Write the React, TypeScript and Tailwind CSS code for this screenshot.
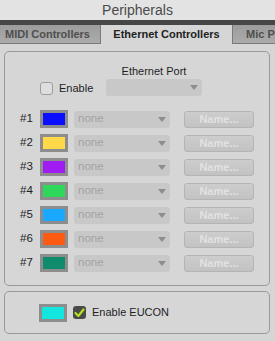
const ROWS = [
  { n: 1, color: "#0a10ff" },
  { n: 2, color: "#ffd94a" },
  { n: 3, color: "#a11cf2" },
  { n: 4, color: "#2fd85a" },
  { n: 5, color: "#1aa8ff" },
  { n: 6, color: "#ff5a12" },
  { n: 7, color: "#0e8c6c" },
];

function Swatch({ color }: { color: string }) {
  return (
    <div className="h-[18px] w-[28px] shrink-0 border-[3px] border-[#8d8d8d] bg-[#8d8d8d]">
      <div className="h-full w-full" style={{ background: color }} />
    </div>
  );
}

function Arrow() {
  return (
    <svg width="8" height="5" viewBox="0 0 8 5" className="shrink-0">
      <path d="M0 0 L8 0 L4 5 Z" fill="#8c8c8c" />
    </svg>
  );
}

function Select({ width, label }: { width: number; label?: string }) {
  return (
    <div
      className="flex h-[17px] shrink-0 items-center justify-between rounded-[3px] bg-[#c8c8c8] pl-[4px] pr-[4px]"
      style={{ width }}
    >
      <span className="text-[11.5px] leading-none text-[#a3a3a3]">{label}</span>
      <Arrow />
    </div>
  );
}

export default function App() {
  return (
    <div className="flex h-[341px] w-[275px] flex-col overflow-hidden bg-[#d6d6d6] font-['Liberation_Sans',Arial,sans-serif]">
      <div className="flex h-[20px] shrink-0 items-center justify-center bg-[#e3e3e3] text-[14px] text-[#4a4a4a]">
        Peripherals
      </div>
      <div className="h-[5px] shrink-0 bg-[#464646]" />
      <div className="flex h-[19px] shrink-0 text-[11px] font-bold">
        <div className="flex w-[101px] shrink-0 items-center border-b border-r border-[#7a7a7a] bg-gradient-to-b from-[#9c9c9c] to-[#ababab] pl-[5px] text-[#4e4e4e]">
          MIDI Controllers
        </div>
        <div className="flex w-[131px] shrink-0 items-center justify-center bg-[#d6d6d6] text-[#222]">
          Ethernet Controllers
        </div>
        <div className="flex flex-1 items-center overflow-hidden whitespace-nowrap border-b border-l border-[#7a7a7a] bg-gradient-to-b from-[#9c9c9c] to-[#ababab] pl-[13px] text-[#4e4e4e]">
          Mic P
        </div>
      </div>

      <div className="ml-[4px] mr-[5px] mt-[7px] flex h-[235px] shrink-0 flex-col rounded-[5px] border border-[#9a9a9a] px-[15px] pt-[12px]">
        <div className="flex">
          <div className="w-[86px] shrink-0" />
          <div className="w-[96px] text-center text-[11px] leading-[14px] text-[#1e1e1e]">
            Ethernet Port
          </div>
        </div>
        <div className="mt-[1px] flex h-[17px] items-center">
          <div className="ml-[20px] h-[13px] w-[13px] shrink-0 translate-y-[1px] rounded-[3px] border border-[#9c9c9c] bg-[#dedede]" />
          <span className="ml-[6px] w-[47px] translate-y-[1px] text-[11px] text-[#1e1e1e]">Enable</span>
          <Select width={96} />
        </div>
        <div className="mt-[14px] flex flex-col gap-[6px]">
          {ROWS.map((r) => (
            <div key={r.n} className="flex h-[18px] items-center">
              <span className="w-[20px] shrink-0 text-[11.5px] text-[#1e1e1e]">#{r.n}</span>
              <Swatch color={r.color} />
              <div className="ml-[6px]">
                <Select width={96} label="none" />
              </div>
              <div className="ml-[14px] flex h-[17px] w-[71px] items-center justify-center rounded-[3px] border border-[#b4b4b4] bg-gradient-to-b from-[#cdcdcd] to-[#c2c2c2] text-[11px] font-bold text-[#e2e2e2]">
                Name...
              </div>
            </div>
          ))}
        </div>
      </div>

      <div className="ml-[4px] mr-[5px] mt-[5px] flex h-[43px] shrink-0 items-center rounded-[5px] border border-[#9a9a9a] pl-[34px]">
        <Swatch color="#12e6df" />
        <div className="ml-[6px] flex h-[13px] w-[13px] items-center justify-center rounded-[3px] bg-[#4a4a4a]">
          <svg width="11" height="10" viewBox="0 0 11 10">
            <path d="M1.5 5 L4.3 8 L9.5 1.5" stroke="#b4e01e" strokeWidth="2.2" fill="none" strokeLinecap="round" strokeLinejoin="round" />
          </svg>
        </div>
        <span className="ml-[6px] text-[11px] text-[#1e1e1e]">Enable EUCON</span>
      </div>
    </div>
  );
}
